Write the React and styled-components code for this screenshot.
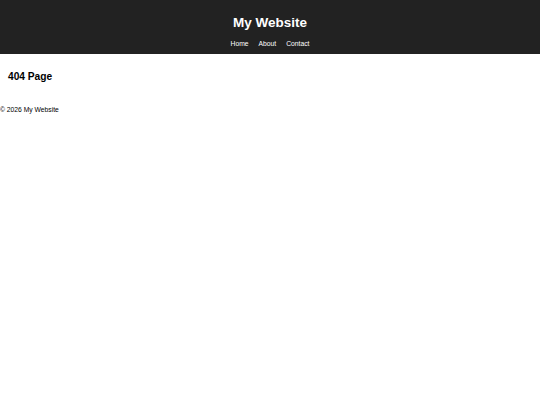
import React from 'react'
import styled, { createGlobalStyle } from 'styled-components';

const GlobalStyle = createGlobalStyle`
body {
    margin: 0;
    font-family: "Liberation Sans", Arial, sans-serif;
    background: #fff;
    color: #000;
}
`;

const App = () => {
    return (
        <>
            <GlobalStyle />
            <Header>
                <SiteTitle>My Website</SiteTitle>
                <Nav>
                    <NavLink href="#">Home</NavLink>
                    <NavLink href="#">About</NavLink>
                    <NavLink href="#">Contact</NavLink>
                </Nav>
            </Header>
            <Main>
                <PageTitle>404 Page</PageTitle>
            </Main>
            <Footer>© 2026 My Website</Footer>
        </>
    )
}

export default App


const Header = styled.header`
background-color: #222;
color: #fff;
height: 54px;
display: flex;
flex-direction: column;
align-items: center;
padding-top: 15px;
box-sizing: border-box;
`;

const SiteTitle = styled.h1`
margin: 0;
font-size: 13.5px;
font-weight: bold;
line-height: 16px;
`;

const Nav = styled.nav`
display: flex;
gap: 10px;
margin-top: 8px;
`;

const NavLink = styled.a`
color: #fff;
text-decoration: none;
font-size: 6.75px;
line-height: 9px;
`;

const Main = styled.main`
padding: 17px 8px 0;
`;

const PageTitle = styled.h2`
margin: 0;
font-size: 10.2px;
font-weight: bold;
line-height: 12px;
`;

const Footer = styled.footer`
margin-top: 22px;
font-size: 6.75px;
line-height: 9px;
`;
